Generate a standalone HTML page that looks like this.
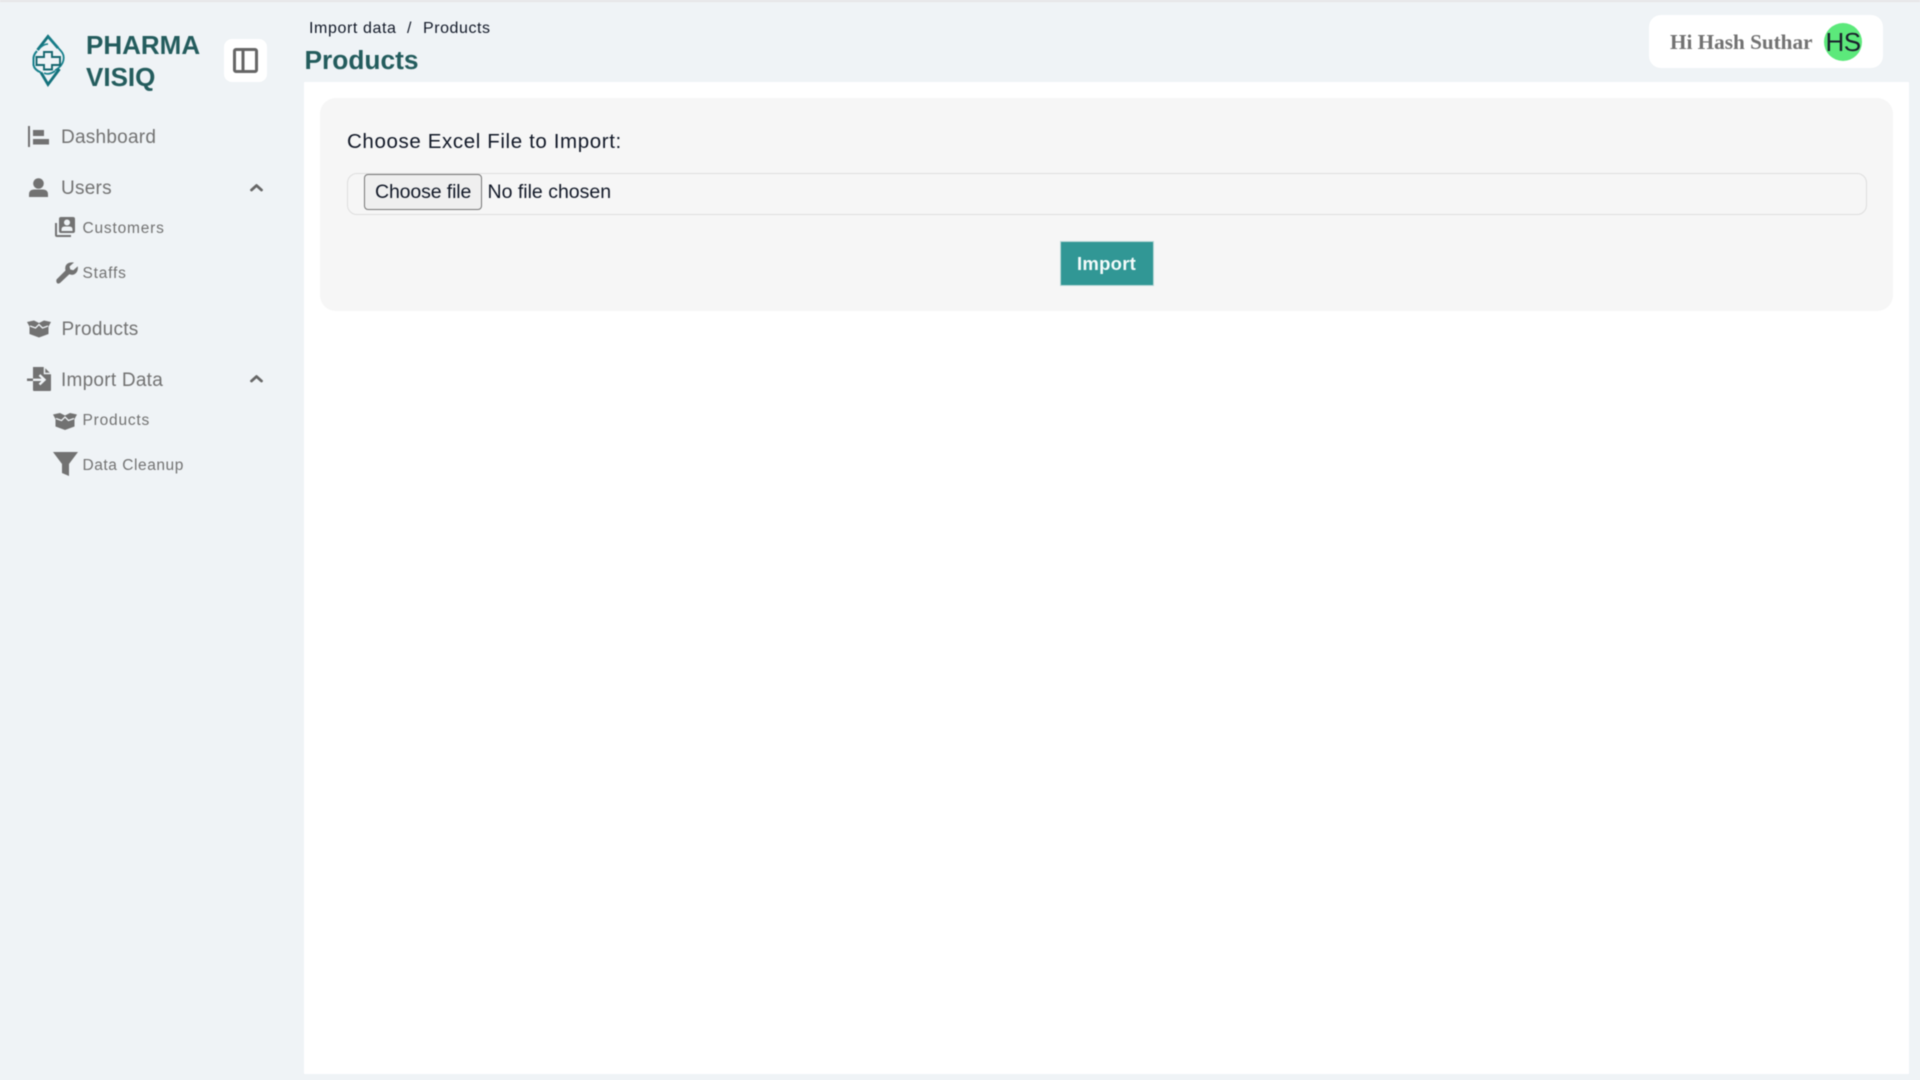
<!DOCTYPE html>
<html lang="en">
<head>
<meta charset="utf-8">
<title>Products</title>
<style>
html,body{margin:0;padding:0;width:1920px;height:1080px;overflow:hidden;background:#eff3f6}
body{position:relative;font-family:"Liberation Sans",sans-serif}
#w{position:absolute;left:0;top:0;width:1920px;height:1080px;filter:blur(.4px)}
.a,.t{position:absolute}
.t{white-space:nowrap;line-height:1}
.n{font-size:19px;color:#727272;letter-spacing:.25px}
.s{font-size:15.5px;color:#727272;letter-spacing:.8px}
svg{position:absolute;left:0;top:0}
</style>
</head>
<body>
<div id="w">
<div class="a" style="left:0;top:0;width:1920px;height:2px;background:#e6e6e6"></div>
<div class="a" style="left:304px;top:82px;width:1605px;height:992px;background:#fff"></div>
<div class="a" style="left:320px;top:98px;width:1573px;height:213px;background:#f6f6f6;border-radius:16px"></div>

<div class="t" style="left:86px;top:30px;font-size:26px;line-height:31.500px;font-weight:700;color:#235c5d;white-space:normal;width:125px">PHARMA VISIQ</div>
<div class="a" style="left:224px;top:39px;width:43px;height:43px;background:#fff;border-radius:8px"></div>

<div class="t n" style="left:61px;top:128px">Dashboard</div>
<div class="t n" style="left:61px;top:179px">Users</div>
<div class="t s" style="left:82.500px;top:221px">Customers</div>
<div class="t s" style="left:82.500px;top:266px">Staffs</div>
<div class="t n" style="left:61.500px;top:320px">Products</div>
<div class="t n" style="left:61px;top:371px">Import Data</div>
<div class="t s" style="left:82.500px;top:413px">Products</div>
<div class="t s" style="left:82.500px;top:458px;letter-spacing:.55px">Data Cleanup</div>

<div class="t" style="left:309px;top:21px;font-size:16px;color:#111827;letter-spacing:.6px">Import data</div>
<div class="t" style="left:407px;top:21px;font-size:16px;color:#111827">/</div>
<div class="t" style="left:423px;top:21px;font-size:16px;color:#111827;letter-spacing:.55px">Products</div>
<div class="t" style="left:304.500px;top:47px;font-size:26.3px;font-weight:700;color:#235c5d">Products</div>

<div class="t" style="left:347px;top:132px;font-size:20.5px;color:#111827;letter-spacing:.62px">Choose Excel File to Import:</div>
<div class="a" style="left:347px;top:173px;width:1518px;height:40px;border:1.5px solid #dedede;border-radius:10px"></div>
<div class="a" style="left:364px;top:174px;width:116px;height:34px;background:#efefef;border:1px solid #767676;border-radius:4px"></div>
<div class="t" style="left:375px;top:183px;font-size:19.5px;color:#111827;letter-spacing:-.12px">Choose file</div>
<div class="t" style="left:487.500px;top:183px;font-size:19.5px;color:#111827;letter-spacing:0">No file chosen</div>
<div class="a" style="left:1060px;top:241px;width:92px;height:43px;background:#319795;border:1px solid #b9d8d7"></div>
<div class="t" style="left:1077px;top:255px;font-size:18.5px;color:#f4fbfb;font-weight:700;letter-spacing:.25px">Import</div>

<div class="a" style="left:1649px;top:15px;width:234px;height:53px;background:#fff;border-radius:12px"></div>
<div class="t" style="left:1670px;top:31.500px;font-family:'Liberation Serif',serif;font-size:21.2px;font-weight:700;color:#727272">Hi Hash Suthar</div>
<div class="a" style="left:1824px;top:23px;width:38px;height:38px;background:#5ce97b;border-radius:50%"></div>
<div class="t" style="left:1825.500px;top:29px;font-size:26px;color:#1a202c;letter-spacing:-.5px">HS</div>

<svg width="1920" height="1080" viewBox="0 0 1920 1080">
<!-- logo -->
<g fill="none" stroke="#17808c" stroke-linejoin="miter">
<path d="M37.500 50 48 36.500 58 48" stroke-width="2.800" stroke="#14727c"/>
<path d="M48 36.500 61 51Q64.500 55 63.500 60 62.500 66 55 70.500" stroke-width="1.800"/>
<path d="M38 50Q43 44 48 44" stroke-width="1.500"/>
<path d="M37 51Q33 55 33.500 60V65Q34.500 70 41 72.500" stroke-width="2"/>
<path d="M41 72.500 48 84.500 59.500 69" stroke-width="2.800" stroke="#14727c"/>
<path d="M44 73Q49 75.500 55 71" stroke-width="1.800"/>
<path d="M44 52H52V57H60V65H52V69.500H44V65H36.500V57H44Z" stroke="#14666e" stroke-width="1.900"/>
</g>
<!-- toggle -->
<g fill="none" stroke="#666" stroke-width="3"><rect x="234.500" y="49.500" width="22" height="22" rx="1.500"/><path d="M243 49V72"/></g>
<g fill="#727272">
<!-- dashboard -->
<path d="M28 126h2v21h-2zM33 130h11v6H33zM33 139h16v5.500H33z"/>
<!-- user -->
<circle cx="38.500" cy="183.500" r="5.300"/><path d="M29 197v-2.500q0-5 5-5h9q5 0 5 5v2.500z"/>
<!-- customers -->
<path d="M55 223h2v12h14v2H57q-2 0-2-2z"/><path fill-rule="evenodd" d="M61 217h12q2 0 2 2v12q0 2-2 2H61q-2 0-2-2v-12q0-2 2-2zm6 2.500a3 3 0 1 0 .01 0zM61.500 231h11v-1.500q0-3-3-3h-5q-3 0-3 3z"/>
<!-- staffs -->
<path d="M56.500 279.500 65.500 270.500q-1-4.500 1.500-6.500 2.500-2 7-1.500l-4.500 4 .8 3 3 .8 4.500-4q.5 4.500-2 7-2.500 2.500-6.500 1l-9 8.500q-2 1.500-3.200 .3-1.200-1.200-.6-3.600z"/>
<!-- products box -->
<path d="M27 322 34 320.500 39 323 44 320.500 51 322 48.500 326.500V334L39 337.500 29.500 334V326.500Z"/>
<!-- import -->
<path d="M33 367h11l7 7v16q0 1-1 1H34q-1 0-1-1z"/>
<!-- products sub -->
<path d="M53 414.500 60 413 65 415.500 70 413 77 414.500 74.500 419V426.500L65 430 55.500 426.500V419Z"/>
<!-- filter -->
<path d="M53 452h25l-9 12v12l-7-3v-9z"/>
</g>
<g fill="none" stroke="#eff3f6" stroke-width="1.300">
<path d="M30 326 35.500 328 39 324.500 42.500 328 48 326"/>
<path d="M56 418.500 61.500 420.500 65 417 68.500 420.500 74 418.500"/>
<path d="M44.500 367V373.500H51" stroke-width="1.500"/>
<path d="M33 379.800H43M39.500 375 44.500 379.800 39.500 384.500" stroke-width="2.400"/>
</g>
<path d="M27 378.500h6v2.500h-6z" fill="#727272"/>
<g fill="none" stroke="#666" stroke-width="2.800" stroke-linecap="round" stroke-linejoin="round">
<path d="M251.500 190l5-4.500 5 4.500M251.500 381l5-4.500 5 4.500"/>
</g>
</svg>
</div>
</body>
</html>
